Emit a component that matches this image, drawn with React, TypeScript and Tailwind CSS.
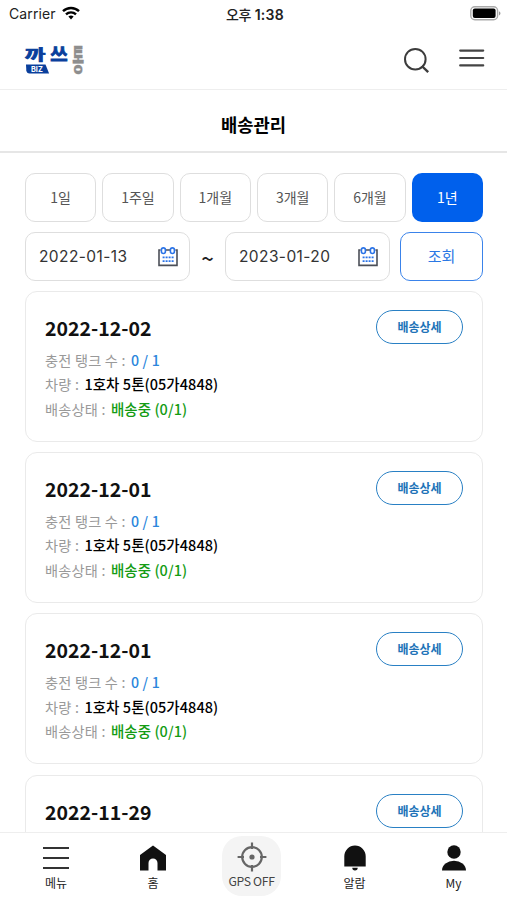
interface Delivery {
    date: string;
    tanks: string;
    car: string;
    status: string;
}

const periods = ["1일", "1주일", "1개월", "3개월", "6개월", "1년"];

const deliveries: Delivery[] = [
    { date: "2022-12-02", tanks: "0 / 1", car: "1호차 5톤(05가4848)", status: "배송중 (0/1)" },
    { date: "2022-12-01", tanks: "0 / 1", car: "1호차 5톤(05가4848)", status: "배송중 (0/1)" },
    { date: "2022-12-01", tanks: "0 / 1", car: "1호차 5톤(05가4848)", status: "배송중 (0/1)" },
    { date: "2022-11-29", tanks: "0 / 1", car: "1호차 5톤(05가4848)", status: "배송중 (0/1)" },
];

const StatusBar = () => {
    return (
        <div className="grid grid-cols-3 items-center h-7 pl-[9px] pr-[6px] font-['Inter','Noto_Sans_CJK_KR',sans-serif] text-[14px] text-[#222]">
            <div className="flex items-center gap-[6px] -mt-[2px]">
                <span className="tracking-[0.1px]">Carrier</span>
                <svg width="18" height="14" viewBox="0 0 18 14" fill="none" stroke="#000" strokeWidth="2.4">
                    <path d="M1 5.2a11.5 11.5 0 0 1 16 0" />
                    <path d="M4 8.4a7.2 7.2 0 0 1 10 0" />
                    <path d="M6.4 10.6a3.8 3.8 0 0 1 5.2 0L9 13.4z" fill="#000" stroke="none" />
                </svg>
            </div>
            <p className="text-center font-semibold text-[#222] whitespace-nowrap">
                <span className="text-[14px] tracking-[-0.3px] font-medium">오후</span>{" "}
                <span className="tracking-[0.3px]">1:38</span>
            </p>
            <svg className="justify-self-end -mt-[2px]" width="31" height="15" viewBox="0 0 31 15">
                <rect x="0.8" y="0.8" width="26.8" height="13" rx="4" fill="#fff" stroke="#aaa" strokeWidth="1.4" />
                <rect x="2.8" y="2.6" width="22.8" height="9.4" rx="2" fill="#000" />
                <path d="M29 5.2c2 .8 2 3.4 0 4.2z" fill="#999" />
            </svg>
        </div>
    );
};

const Logo = () => {
    return (
        <svg width="64" height="36" viewBox="0 0 64 36" overflow="visible" className="font-['Noto_Sans_CJK_KR',sans-serif] font-bold">
            <text transform="translate(-0.2 16.8) scale(1.25 0.82)" fontSize="18" fill="#0a3f9c" stroke="#0a3f9c" strokeWidth="0.9">
                까
            </text>
            <text transform="translate(25.3 18.4) scale(1.05 1)" fontSize="18" fill="#0a3f9c" stroke="#0a3f9c" strokeWidth="0.9">
                쓰
            </text>
            <text transform="translate(47.2 28) scale(0.78 1.85)" fontSize="16.5" fill="#8e8e8e" stroke="#8e8e8e" strokeWidth="0.3">
                통
            </text>
            <path d="M1 21.5h19.5l3.6 9H4.5Q1.8 30.5 1.3 27.5z" fill="#0a3f9c" />
            <text x="6" y="28.8" fontSize="7.3" fill="#fff" className="font-['Inter',sans-serif]">
                BIZ
            </text>
        </svg>
    );
};

const Header = () => {
    return (
        <header className="flex items-start justify-between h-[62px] pl-[25px] pr-[21px] border-b border-[#eee]">
            <div className="pt-[15px]">
                <Logo />
            </div>
            <div className="flex items-start gap-[29px] pt-[19px]">
                <svg width="27" height="27" viewBox="0 0 27 27" fill="none" stroke="#3c3c3c" strokeWidth="2">
                    <circle cx="12.3" cy="12.2" r="10.3" />
                    <path d="M18.8 19l6.4 6.2" strokeWidth="2.4" />
                </svg>
                <svg width="27" height="22" viewBox="0 0 27 22" stroke="#444" strokeWidth="2.2" strokeLinecap="round">
                    <path d="M1.2 3.6h23M1.2 11h23M1.2 18.4h23" />
                </svg>
            </div>
        </header>
    );
};

const CalendarIcon = () => {
    return (
        <svg width="20" height="20" viewBox="0 0 20 20" fill="none">
            <path d="M2.6 3H1v15.4h18V3h-1.6M7.6 3h4.4" stroke="#4b4f58" strokeWidth="1.6" />
            <g stroke="#2b74e8" strokeWidth="1.6">
                <rect x="3.4" y="0.9" width="4" height="5.6" rx="2" />
                <rect x="12.4" y="0.9" width="4" height="5.6" rx="2" />
                <path d="M4.6 10.4h11M4.6 14.2h11" strokeWidth="1.8" strokeDasharray="2 1" />
            </g>
        </svg>
    );
};

const DateField = ({ value }: { value: string }) => {
    return (
        <div className="flex items-center justify-between w-[165px] h-[49px] pl-[13px] pr-[11px] border-[1.5px] border-[#dedede] rounded-[10px]">
            <span className="font-['Inter',sans-serif] text-[15.5px] text-[#333] tracking-[0.4px]">{value}</span>
            <CalendarIcon />
        </div>
    );
};

const DeliveryCard = ({ date, tanks, car, status }: Delivery) => {
    return (
        <li className="flex justify-between shrink-0 h-[150.5px] pl-[19px] pr-[19px] border border-[#eaeaea] rounded-[12px]">
            <div className="pt-[21px] text-[14.2px] leading-[24.3px] text-[#999]">
                <p className="text-[19.5px] leading-[29px] mb-[6px] font-bold text-[#111]">{date}</p>
                <p className="tracking-[0.2px]">
                    충전 탱크 수 : <span className="ml-[2px] font-medium text-[#2b86dc]">{tanks}</span>
                </p>
                <p className="tracking-[0.2px]">
                    차량 : <span className="ml-[2px] tracking-[0.05px] text-[14.5px] font-medium text-black">{car}</span>
                </p>
                <p className="tracking-[0.2px]">
                    배송상태 : <span className="ml-[2px] tracking-[0.05px] text-[14.5px] font-medium text-[#149c14]">{status}</span>
                </p>
            </div>
            <button className="mt-[18px] w-[87px] h-[34px] border-[1.5px] border-[#2980c4] rounded-full text-[12px] font-bold text-[#2073b8]">
                배송상세
            </button>
        </li>
    );
};

const BottomNav = () => {
    return (
        <nav className="flex shrink-0 h-[68px] border-t border-[#eee] bg-white text-[12px] leading-[18px] text-[#222]">
            <div className="flex flex-col items-center w-[112px] pt-[12px]">
                <svg width="28" height="26" viewBox="0 0 28 26" stroke="#333" strokeWidth="2">
                    <path d="M1 3h26M1 13h26M1 23h26" />
                </svg>
                <span className="mt-[3px]">메뉴</span>
            </div>
            <div className="flex flex-col items-center w-[82px] pt-[12px]">
                <svg width="28" height="26" viewBox="0 0 28 26" fill="#111">
                    <path d="M14 .5L27 10v15.5h-8.5V18a4.5 4.5 0 0 0-9 0v7.5H1V10z" />
                </svg>
                <span className="mt-[3px]">홈</span>
            </div>
            <div className="flex flex-col items-center w-[115px] pt-[3px] text-[12.2px] tracking-[-0.35px] text-[#444]">
                <div className="flex flex-col items-center w-[59px] h-[60px] pt-[6px] rounded-[20px] bg-[#f4f4f4]">
                    <svg width="30" height="30" viewBox="0 0 30 30" fill="none" stroke="#666" strokeWidth="2.2">
                        <circle cx="15" cy="15" r="9.8" />
                        <circle cx="15" cy="15" r="2.6" fill="#666" stroke="none" />
                        <path d="M15 .6v6.4M15 23v6.4M.6 15H7M23 15h6.4" />
                    </svg>
                    <span className="whitespace-nowrap">GPS OFF</span>
                </div>
            </div>
            <div className="flex flex-col items-center w-[91px] pt-[12px]">
                <svg width="24" height="26" viewBox="0 0 24 26" fill="#111">
                    <path d="M1.3 21.5V11.2a10.7 10.7 0 0 1 21.4 0v10.3zM9.3 22.8h5.4a2.7 2.7 0 0 1-5.4 0z" />
                </svg>
                <span className="mt-[3px]">알람</span>
            </div>
            <div className="flex flex-col items-center w-[107px] pt-[12px]">
                <svg width="26" height="26" viewBox="0 0 26 26" fill="#111">
                    <circle cx="13" cy="7" r="6.7" />
                    <path d="M1 25.5a12 9.8 0 0 1 24 0z" />
                </svg>
                <span className="mt-[3px]">My</span>
            </div>
        </nav>
    );
};

const App = () => {
    return (
        <div className="flex flex-col h-screen overflow-hidden bg-white font-['Noto_Sans_CJK_KR',sans-serif]">
            <StatusBar />
            <Header />
            <div className="flex items-center justify-center h-[63px] pt-[8px] border-b-2 border-[#e6e6e6]">
                <h1 className="text-[17.7px] font-bold text-black">배송관리</h1>
            </div>
            <main className="flex flex-col flex-1 min-h-0 pt-[20px] pl-[25px] pr-[24px] overflow-hidden">
                <div className="grid grid-cols-6 gap-[6px] shrink-0">
                    {periods.map((period) => (
                        <button
                            key={period}
                            className={
                                period == "1년"
                                    ? "h-[49px] rounded-[10px] bg-[#0060ec] text-[14px] text-white"
                                    : "h-[49px] rounded-[10px] border-[1.5px] border-[#dedede] text-[14px] text-[#555]"
                            }
                        >
                            {period}
                        </button>
                    ))}
                </div>
                <div className="flex items-center shrink-0 mt-[10px]">
                    <DateField value="2022-01-13" />
                    <span className="w-[35px] text-center text-[22px] leading-none font-medium text-[#222]">~</span>
                    <DateField value="2023-01-20" />
                    <button className="ml-auto w-[83px] h-[49px] border-[1.5px] border-[#3a83ea] rounded-[10px] text-[15px] text-[#2b78e4]">
                        조회
                    </button>
                </div>
                <ul className="flex flex-col gap-[10.7px] mt-[10px]">
                    {deliveries.map((delivery, i) => (
                        <DeliveryCard key={i} {...delivery} />
                    ))}
                </ul>
            </main>
            <BottomNav />
        </div>
    );
};

export default App;
